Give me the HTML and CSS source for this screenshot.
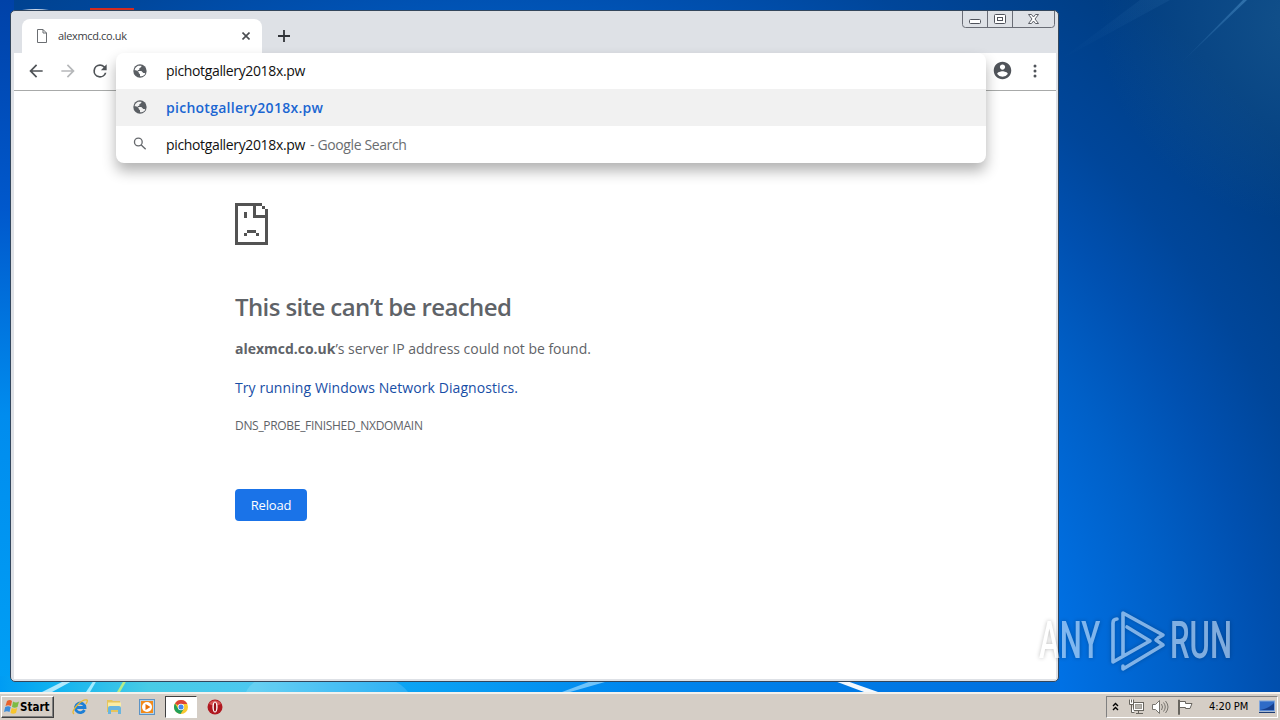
FILE: index.html
```
<!DOCTYPE html>
<html lang="en">

<head>
    <meta charset="UTF-8">
    <meta name="viewport" content="width=device-width, initial-scale=1.0">
    <title>alexmcd.co.uk</title>
    <link rel="stylesheet" href="styles.css">
</head>

<body>
    <!-- wallpaper -->
    <svg class="wallpaper" viewBox="0 0 1280 692" preserveAspectRatio="none">
        <defs>
            <linearGradient id="ray" x1="0" y1="1" x2="1" y2="0">
                <stop offset="0" stop-color="#5aa0d8" stop-opacity="0" />
                <stop offset="1" stop-color="#5aa0d8" stop-opacity=".45" />
            </linearGradient>
            <linearGradient id="leftEdge" x1="0" y1="0" x2="0" y2="1">
                <stop offset="0" stop-color="#0042a8" />
                <stop offset=".3" stop-color="#0058cc" />
                <stop offset=".6" stop-color="#008cee" />
                <stop offset="1" stop-color="#00a0f5" />
            </linearGradient>
            <linearGradient id="bottomEdge" x1="0" y1="0" x2="1" y2="0">
                <stop offset="0" stop-color="#009cf3" />
                <stop offset=".05" stop-color="#10b2f0" />
                <stop offset=".14" stop-color="#48cbe6" />
                <stop offset=".24" stop-color="#4cc8f0" />
                <stop offset=".38" stop-color="#0ca4f4" />
                <stop offset=".6" stop-color="#0086ee" />
                <stop offset="1" stop-color="#006ede" />
            </linearGradient>
        </defs>
        <rect width="14" height="692" fill="url(#leftEdge)" />
        <rect y="676" width="1060" height="16" fill="url(#bottomEdge)" />
        <path d="M1180 64L1243 0h4z" fill="url(#ray)" />
        <path d="M1060 60L1140 0h30z" fill="url(#ray)" opacity=".2" />
        <path d="M42 692L66 680h8L52 692z" fill="#d8f6ff" opacity=".8" />
        <path d="M86 692l8-12h3l-7 12z" fill="#a5ecff" />
        <path d="M117 692l7-12h3l-7 12z" fill="#b5ec8a" />
        <path d="M246 692q4-8 12-12h134q10 4 16 12z" fill="#fff" opacity=".15" />
        <path d="M562 692l32-12h18l-42 12z" fill="#9fdcff" opacity=".7" />
        <path d="M832 680h12l34 12h-14z" fill="#fff" opacity=".95" />
        <path d="M22 10q14-2 27 0z" fill="#cdd8e8" />
        <rect x="90" y="8" width="44" height="3" fill="#d22b20" />
    </svg>

    <div class="desktop">
        <!-- browser window -->
        <div class="window">
            <div class="tab-strip">
                <div class="tab">
                    <svg class="page-icon" width="12" height="14" viewBox="0 0 12 14" fill="none" stroke="#6b6e72">
                        <path d="M1.500.5h5.500l3.500 3.500v9.500h-9zM7 .5V4h3.500" />
                    </svg>
                    <span class="tab-title">alexmcd.co.uk</span>
                    <svg class="tab-close" width="8" height="8" viewBox="0 0 8 8" stroke="#4a4d51" stroke-width="1.600">
                        <path d="M.5.500l7 7M7.500.5l-7 7" />
                    </svg>
                </div>
                <svg class="new-tab" width="12" height="12" viewBox="0 0 12 12" stroke="#303338" stroke-width="1.800">
                    <path d="M6 0v12M0 6h12" />
                </svg>
                <div class="caption-buttons">
                    <svg width="94" height="18" viewBox="0 0 94 18" fill="none" stroke="#6a6d76">
                        <path d="M.5 0v13.500q0 3 3 3h86q3 0 3-3V0M25.500 0v16M50.500 0v16" />
                        <rect x="7.500" y="8.500" width="11" height="4" rx="1" fill="#fff" stroke="#50535c" />
                        <rect x="32.500" y="3.500" width="11" height="9" rx="1" fill="#fff" stroke="#50535c" />
                        <rect x="35.500" y="6.500" width="5" height="3" stroke="#50535c" />
                        <path d="M66.500 3.500h3l2 2.500 2-2.500h3L73 8l3.500 4.500h-3l-2-2.500-2 2.500h-3L70 8z" fill="#fff" stroke="#5b5e67" />
                    </svg>
                </div>
            </div>

            <div class="toolbar">
                <svg class="nav-icon" viewBox="0 0 24 24" fill="#4f5357"><path d="M20 11H7.830l5.590-5.590L12 4l-8 8 8 8 1.410-1.410L7.830 13H20v-2z" /></svg>
                <svg class="nav-icon" viewBox="0 0 24 24" fill="#b6b8ba"><path d="M12 4l-1.410 1.410L16.170 11H4v2h12.170l-5.580 5.590L12 20l8-8z" /></svg>
                <svg class="nav-icon" viewBox="0 0 24 24" fill="#4f5357"><path d="M17.650 6.350A7.960 7.960 0 0 0 12 4a8 8 0 1 0 7.730 10h-2.080A6 6 0 1 1 12 6c1.660 0 3.140.69 4.220 1.780L13 11h7V4z" /></svg>

                <div class="toolbar-right">
                    <svg class="profile-icon" viewBox="0 0 24 24" fill="#50545a"><path d="M12 2C6.480 2 2 6.480 2 12s4.480 10 10 10 10-4.480 10-10S17.520 2 12 2zm0 3c1.660 0 3 1.340 3 3s-1.340 3-3 3-3-1.340-3-3 1.340-3 3-3zm0 14.200a7.200 7.200 0 0 1-6-3.220c.03-1.990 4-3.080 6-3.080 1.990 0 5.970 1.090 6 3.080a7.200 7.200 0 0 1-6 3.220z" /></svg>
                    <svg class="menu-icon" width="4" height="14" viewBox="0 0 4 14" fill="#50545a"><circle cx="2" cy="2" r="1.500" /><circle cx="2" cy="7" r="1.500" /><circle cx="2" cy="12" r="1.500" /></svg>
                </div>
            </div>

            <!-- address bar with its suggestions -->
            <div class="omnibox">
                <div class="omnibox-row">
                    <svg class="globe" viewBox="0 0 24 24"><circle cx="12" cy="12" r="10" fill="#5a5e63" /><path d="M4 11c0-3 2-5 5-7h5v2l-3 2v2l-3 1 1 1h5l3 3h2l1 1c-2 3-4 4-8 4v-3l-2-2v-2l-4-2z" fill="#fff" /></svg>
                    <span class="url typed">pichotgallery2018x.pw</span>
                </div>
                <div class="omnibox-row selected">
                    <svg class="globe" viewBox="0 0 24 24"><circle cx="12" cy="12" r="10" fill="#5a5e63" /><path d="M4 11c0-3 2-5 5-7h5v2l-3 2v2l-3 1 1 1h5l3 3h2l1 1c-2 3-4 4-8 4v-3l-2-2v-2l-4-2z" fill="#f1f1f1" /></svg>
                    <span class="url match">pichotgallery2018x.pw</span>
                </div>
                <div class="omnibox-row">
                    <svg class="globe" viewBox="0 0 24 24" fill="none" stroke="#66696d" stroke-width="2"><circle cx="9.500" cy="9" r="5.800" /><path d="M13.500 13l7 7" /></svg>
                    <span class="url">pichotgallery2018x.pw</span><span class="hint">- Google Search</span>
                </div>
            </div>

            <!-- error page -->
            <main class="error-page">
                <svg class="sad-icon" width="33" height="42" viewBox="0 0 11 14" fill="#535353" shape-rendering="crispEdges">
                    <path d="M0 0h9v1H1v12h9V5H6V1h1v3h3V2h1v12H0zM9 1h1v1H9zM3 3h1v2H3zM4 9h3v1H4zM3 10h1v1H3zM7 10h1v1H7z" />
                </svg>
                <h1>This site can’t be reached</h1>
                <p class="summary"><strong>alexmcd.co.uk</strong><span>’s server IP address could not be found.</span></p>
                <p class="suggestion"><a>Try running Windows Network Diagnostics.</a></p>
                <p class="error-code">DNS_PROBE_FINISHED_NXDOMAIN</p>
                <button class="reload">Reload</button>
            </main>
        </div>
    </div>

    <!-- watermark -->
    <div class="watermark">
        <span class="any">ANY</span>
        <svg width="56" height="62" viewBox="0 0 56 62" fill="none" stroke="#fff" stroke-width="3.600" stroke-linejoin="round" stroke-linecap="round">
            <path d="M7 9Q3 9 3 13V52L40 31L17 17M13 46V3L53 25L48 28M13 56V59L53 35L46 30" />
        </svg>
        <span class="run">RUN</span>
    </div>

    <!-- taskbar -->
    <div class="taskbar">
        <div class="start">
            <svg width="16" height="16" viewBox="0 0 16 16">
                <path d="M3 2q3-2 5 0L7 7Q4 5.500 1.500 7z" fill="#e8622c" />
                <path d="M9 2.500q3 2 6 0L13.500 8q-3 1.500-5.500 0z" fill="#7dbb42" />
                <path d="M1.200 8q3-1.500 5.500 0L5.500 13Q3 11.500 0 13z" fill="#3c8ddb" />
                <path d="M7.700 9q3 1.500 5.500 0L12 14q-3 1.500-5.500 0z" fill="#f7c52d" />
            </svg>
            <span>Start</span>
        </div>
        <div class="quick-launch">
            <div class="task">
                <svg width="16" height="16" viewBox="0 0 16 16" fill="none">
                    <path d="M12.500 11A4.800 4.800 0 1 1 13 8.500H4.500" stroke="#1d7fd6" stroke-width="2.800" />
                    <path d="M2 15Q-1 13 5 6.500T15 1q1 1-1 4" stroke="#e8b830" stroke-width="1.300" />
                </svg>
            </div>
            <div class="task">
                <svg width="16" height="16" viewBox="0 0 16 16">
                    <path d="M1 1h5l1 1h7v11H1z" fill="#e6c45c" />
                    <path d="M2 3.500h13v5H2z" fill="#faeca4" />
                    <path d="M2 15V9q0-2 2-2h9q2 0 2 2v6h-3v-4H5v4z" fill="#69b5df" />
                </svg>
            </div>
            <div class="task">
                <svg width="16" height="16" viewBox="0 0 16 16">
                    <rect x=".5" y=".5" width="15" height="15" fill="#b4d2ea" stroke="#5c93c5" />
                    <rect x="2" y="2" width="12" height="12" fill="#f28a1a" />
                    <circle cx="8" cy="8" r="5" fill="#fff" />
                    <path d="M6.500 5l5 3-5 3z" fill="#e8710a" />
                </svg>
            </div>
            <div class="task active">
                <svg width="14" height="14" viewBox="0 0 14 14">
                    <circle cx="7" cy="7" r="7" fill="#f9c82f" />
                    <path d="M7 7L1 3.400A7 7 0 0 1 13.300 4H7z" fill="#dc4437" />
                    <path d="M1 3.400A7 7 0 0 0 6.500 14L10 8.500 7 7 4 8.500z" fill="#22a05a" />
                    <circle cx="7" cy="7" r="3.200" fill="#fff" />
                    <circle cx="7" cy="7" r="2.500" fill="#4487ed" />
                </svg>
            </div>
            <div class="task">
                <svg width="16" height="16" viewBox="0 0 16 16">
                    <circle cx="8" cy="8" r="7.500" fill="#b01820" />
                    <path d="M2 5a7 7 0 0 1 12 0q-6 3-12 0z" fill="#d65555" />
                    <ellipse cx="8" cy="8" rx="2.600" ry="5.500" fill="#fff" />
                    <ellipse cx="8" cy="8" rx="1.200" ry="4.500" fill="#981017" />
                </svg>
            </div>
        </div>
        <div class="tray">
            <svg class="chevrons" width="7" height="9" viewBox="0 0 7 9" fill="none" stroke="#000" stroke-width="1.400"><path d="M1 4l2.500-2.500L6 4M1 8l2.500-2.500L6 8" /></svg>
            <svg width="16" height="16" viewBox="0 0 16 16" fill="#fff" stroke="#68655f">
                <rect x="5.500" y="3.500" width="10" height="8" />
                <rect x="7.500" y="5.500" width="6" height="4" fill="#b5b2ac" stroke="#a09d96" />
                <path d="M1.500.5v5h4v-5M3.500.5v3M3.500 5.500v8h3M8 14.500h7M10.500 12v2" />
            </svg>
            <svg width="17" height="16" viewBox="0 0 17 16" fill="none" stroke="#77746e">
                <path d="M.5 5.500h3l4-4v13l-4-4h-3z" fill="#fff" />
                <path d="M9.500 5q2 3 0 6M11.500 3.500q3.500 4.500 0 9M13.500 2q5 6 0 12" />
            </svg>
            <svg width="16" height="16" viewBox="0 0 16 16" fill="#fff" stroke="#68655f">
                <path d="M1.500 1v14.500h1V1zM2.500 2.500h6v2h6.500l-2 5H8.500v-1h-6z" />
            </svg>
            <span class="clock">4:20 PM</span>
            <svg width="16" height="14" viewBox="0 0 16 14">
                <rect x=".5" y="1" width="15" height="10" fill="#2f6bc7" stroke="#7fa5dc" />
                <path d="M1 10Q9 9 15 3v7z" fill="#163f8d" />
                <path d="M0 12h16v1H0z" fill="#1c3c74" />
            </svg>
        </div>
    </div>
</body>

</html>
```
FILE: styles.css
```
* {
    margin: 0;
    padding: 0;
    box-sizing: border-box;
}

body {
    display: flex;
    flex-direction: column;
    height: 720px;
    overflow: hidden;
    position: relative;
    font-family: "Open Sans", "Noto Sans", sans-serif;
    background:
        radial-gradient(circle at 1300px 20px, rgba(40, 105, 150, .45), transparent 200px),
        radial-gradient(circle at 500px 760px, #0072e6 560px, #006cdc 602px, #0060c8 682px, #0050b0 772px, #00469a 850px, #003c80 995px);
}

svg {
    display: block;
    flex: none;
}

.wallpaper {
    position: absolute;
    top: 0;
    left: 0;
    width: 1280px;
    height: 692px;
}

.desktop {
    flex: 1;
    padding: 10px 0 0 10px;
}

/* window */
.window {
    position: relative;
    width: 1049px;
    height: 672px;
    border: 1px solid #33465c;
    border-radius: 5px;
    background: #dee1e6;
    padding: 0 2px 3px 3px;
}

.tab-strip {
    display: flex;
    height: 42px;
    padding: 8px 0 0 8px;
}

.tab {
    display: flex;
    align-items: center;
    width: 240px;
    height: 34px;
    padding: 0 12px 0 14px;
    border-radius: 8px 8px 0 0;
    background: #fff;
}

.tab-title {
    flex: 1;
    margin: -2px 0 0 10px;
    font-size: 11px;
    letter-spacing: -.35px;
    color: #3c4043;
}

.new-tab {
    margin: 11px 0 0 16px;
}

.caption-buttons {
    margin: -8px 0 0 auto;
}

.toolbar {
    display: flex;
    align-items: center;
    gap: 12px;
    height: 38px;
    padding: 0 19px 2px 12px;
    border-bottom: 1px solid #a8aaa9;
    background: #fff;
}

.nav-icon {
    width: 20px;
    height: 20px;
}

.toolbar-right {
    display: flex;
    align-items: center;
    gap: 20px;
    margin-left: auto;
}

.profile-icon {
    width: 21px;
    height: 21px;
}

/* address bar drops over the page */
.omnibox {
    position: absolute;
    top: 42px;
    left: 105px;
    width: 870px;
    height: 110px;
    border-radius: 8px;
    overflow: hidden;
    background: #fff;
    box-shadow: 0 8px 14px rgba(0, 0, 0, .3);
}

.omnibox-row {
    display: flex;
    align-items: center;
    height: 37px;
    padding-left: 16px;
    font-size: 14px;
    color: #111;
}

.omnibox-row:first-child {
    height: 36px;
}

.omnibox-row.selected {
    background: #f1f1f1;
}

.globe {
    width: 16px;
    height: 16px;
    margin: -1px 18px 0 0;
}

.url {
    width: 140px;
    white-space: nowrap;
    letter-spacing: -.35px;
}

.typed {
    margin-top: -2px;
}

.match {
    width: auto;
    font-weight: 600;
    letter-spacing: .27px;
    color: #1b66d2;
}

.hint {
    margin-left: 4px;
    letter-spacing: -.38px;
    color: #6a6d70;
}

.error-page {
    height: 588px;
    padding: 112px 0 0 221px;
    background: #fff;
    color: #5f6368;
}

.error-page h1 {
    margin-top: 46px;
    font-size: 24px;
    font-weight: 600;
    line-height: 32px;
    letter-spacing: -.6px;
}

.error-page p {
    font-size: 14px;
    line-height: 22px;
    white-space: nowrap;
}

.error-page .summary {
    margin-top: 15px;
    letter-spacing: -.02px;
}

.error-page .suggestion {
    margin-top: 17px;
    letter-spacing: .08px;
    color: #174ea6;
}

.error-page .error-code {
    margin-top: 16px;
    font-size: 12px;
    letter-spacing: -.31px;
}

.reload {
    display: block;
    width: 72px;
    height: 32px;
    margin-top: 52px;
    border: 0;
    border-radius: 4px;
    background: #1a73e8;
    color: #fff;
    font: 13px "Open Sans", sans-serif;
    letter-spacing: -.2px;
}

/* watermark lies over the window and the desktop */
.watermark {
    position: absolute;
    top: 610px;
    left: 1039px;
    display: flex;
    align-items: center;
    width: 200px;
    height: 62px;
    color: #fff;
    font: 500 51px/66px Roboto, sans-serif;
    opacity: .5;
    filter: drop-shadow(0 0 2px rgba(0, 0, 0, .5));
}

.watermark span {
    width: 60px;
    white-space: nowrap;
    transform: scaleX(.61);
    transform-origin: left;
}

.watermark svg {
    margin: 0 4px 0 11px;
}

/* taskbar */
.taskbar {
    position: relative;
    display: flex;
    align-items: center;
    height: 28px;
    padding: 0 2px 1px 1px;
    border-top: 2px solid #f4f1ec;
    background: #d5cec6;
}

.start {
    display: flex;
    align-items: center;
    width: 53px;
    height: 22px;
    padding-left: 2px;
    border: 1px solid;
    border-color: #fff #404040 #404040 #fff;
    box-shadow: inset -1px -1px #808080;
    font: bold 11.500px "DejaVu Sans Condensed", "DejaVu Sans", sans-serif;
}

.quick-launch {
    display: flex;
    gap: 2px;
    margin-left: 10px;
}

.task {
    display: flex;
    align-items: center;
    justify-content: center;
    width: 31.700px;
    height: 22px;
}

.task.active {
    border: 1px solid;
    border-color: #404040 #fff #fff #404040;
    background: #fff;
}

.tray {
    display: flex;
    align-items: center;
    gap: 8px;
    width: 172px;
    height: 22px;
    margin-left: auto;
    padding-left: 5px;
    border: 1px solid;
    border-color: #808080 #fff #fff #808080;
}

.chevrons {
    margin-right: 1px;
}

.clock {
    width: 41px;
    margin: 0 1px 0 8px;
    font: 11px "DejaVu Sans Condensed", "DejaVu Sans", sans-serif;
    letter-spacing: -.1px;
    white-space: nowrap;
}
```
